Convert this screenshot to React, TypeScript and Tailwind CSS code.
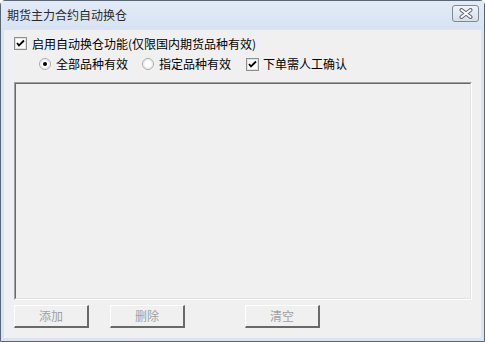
import React from "react";

const font = { fontFamily: '"Noto Sans CJK SC", "Noto Sans", sans-serif' };

function CheckBox({ checked }: { checked: boolean }) {
  return (
    <svg width="13" height="13" viewBox="0 0 13 13" className="shrink-0">
      <rect x="0.5" y="0.5" width="12" height="12" fill="#ffffff" stroke="#8e8f8f" />
      <rect x="1.5" y="1.5" width="10" height="10" fill="#ffffff" stroke="#e2e2e2" />
      {checked && (
        <path d="M3 6 L5 8.5 L10 3.5" fill="none" stroke="#000" strokeWidth="1.8" />
      )}
    </svg>
  );
}

function Radio({ checked }: { checked: boolean }) {
  return (
    <svg width="12" height="12" viewBox="0 0 12 12" className="shrink-0">
      <circle cx="6" cy="6" r="5.5" fill="#ffffff" stroke="#a8a8a8" />
      <circle cx="6" cy="6" r="4.3" fill="#ffffff" stroke="#e4e4e4" />
      {checked && <circle cx="6" cy="6" r="2" fill="#000" />}
    </svg>
  );
}

function Btn({ label, className }: { label: string; className?: string }) {
  return (
    <div
      className={
        "w-[75px] h-[23px] bg-[#f0f0f0] border-t border-l border-t-white border-l-white border-r-2 border-b-2 border-r-[#696969] border-b-[#696969] flex items-center justify-center text-[12px] text-[#a0a0a0] " +
        (className ?? "")
      }
      style={font}
    >
      {label}
    </div>
  );
}

export default function App() {
  return (
    <div
      className="w-[485px] h-[342px] border border-[#5a6673] rounded-t-[5px] bg-[#d9e4f2] flex flex-col px-[3px] pb-[3px]"
      style={font}
    >
      <div className="h-[29px] flex items-start bg-gradient-to-b from-[#e2ebf7] to-[#d7e3f2] -mx-[3px] px-[3px]">
        <span className="text-[12px] leading-[14px] text-[#2a2a2a] pl-[3px] pt-[7px]">
          期货主力合约自动换仓
        </span>
        <div className="ml-auto mr-[2px] mt-[4px] w-[27px] h-[17px] rounded-[3px] border border-[#7d8a9a] bg-gradient-to-b from-[#f1f4f9] to-[#d5dfeb] flex items-center justify-center">
          <svg width="14" height="11" viewBox="0 0 14 11">
            <path d="M2.5 2 L11.5 9 M11.5 2 L2.5 9" stroke="#5f6873" strokeWidth="4" strokeLinecap="round" />
            <path d="M2.5 2 L11.5 9 M11.5 2 L2.5 9" stroke="#ffffff" strokeWidth="2" strokeLinecap="round" />
          </svg>
        </div>
      </div>
      <div className="flex-1 bg-[#f0f0f0] flex flex-col pl-[10px] pt-[7px]">
        <div className="flex items-center h-[13px]">
          <CheckBox checked />
          <span className="ml-[5px] text-[12px] leading-[14px] text-black whitespace-nowrap">
            启用自动换仓功能(仅限国内期货品种有效)
          </span>
        </div>
        <div className="flex items-center h-[12px] mt-[8px] pl-[25px]">
          <Radio checked />
          <span className="ml-[5px] w-[72px] text-[12px] leading-[14px] text-black whitespace-nowrap">
            全部品种有效
          </span>
          <div className="ml-[14px]">
            <Radio checked={false} />
          </div>
          <span className="ml-[5px] w-[72px] text-[12px] leading-[14px] text-black whitespace-nowrap">
            指定品种有效
          </span>
          <div className="ml-[15px]">
            <CheckBox checked />
          </div>
          <span className="ml-[4px] text-[12px] leading-[14px] text-black whitespace-nowrap">
            下单需人工确认
          </span>
        </div>
        <div className="mt-[12px] w-[458px] h-[218px] border border-t-[#a0a0a0] border-l-[#a0a0a0] border-r-white border-b-white">
          <div className="w-full h-full border border-t-[#696969] border-l-[#696969] border-r-[#e3e3e3] border-b-[#e3e3e3] bg-[#f0f0f0]" />
        </div>
        <div className="flex mt-[5px]">
          <Btn label="添加" />
          <Btn label="删除" className="ml-[21px]" />
          <Btn label="清空" className="ml-[60px]" />
        </div>
      </div>
    </div>
  );
}
